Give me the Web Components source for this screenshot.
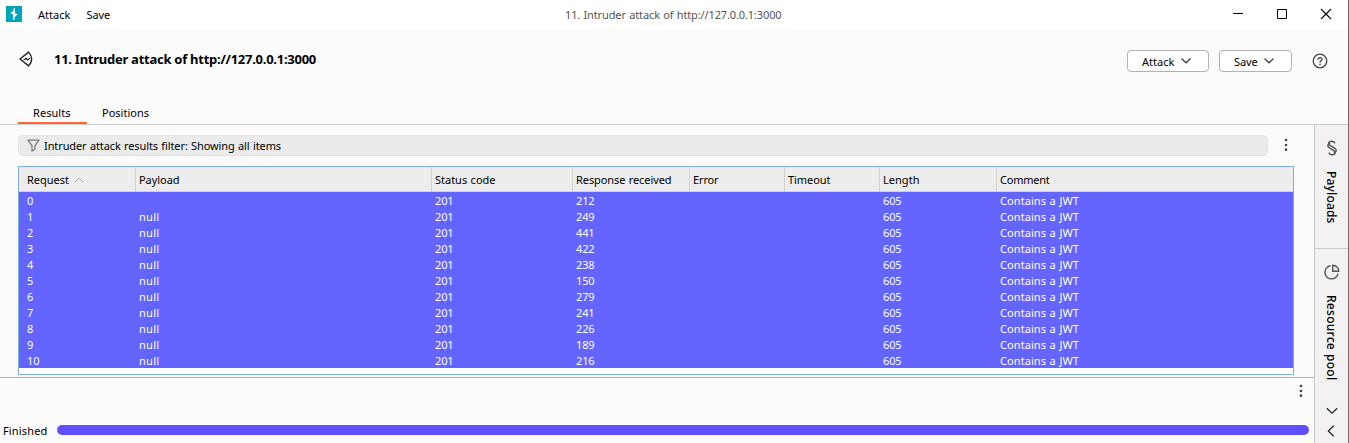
<!DOCTYPE html>
<html lang="en"><head><meta charset="utf-8"><title>Intruder attack</title>
<style>html,body{margin:0;height:100%;overflow:hidden}body{font:11px/16px "Noto Sans","Open Sans",sans-serif;color:#000}</style></head>
<body><attack-window></attack-window>
<script>
// Text run whose tracking is adjusted so that it fills a given advance width.
customElements.define('ui-text', class extends HTMLElement{
  connectedCallback(){
    const r=this.attachShadow({mode:'open'});
    r.innerHTML='<style>:host{display:inline-block;white-space:pre;word-spacing:.6px}span{display:inline-block}</style><span></span>';
    const s=r.querySelector('span');s.textContent=this.getAttribute('text');
    const w=+this.getAttribute('w');
    if(w){const vertical=getComputedStyle(this).writingMode!=='horizontal-tb',b=s.getBoundingClientRect();
      s.style.letterSpacing=((w-(vertical?b.height:b.width))/s.textContent.length)+'px';}
  }
});
const ICONS={
 logo:[16,16,'<path fill="#00a5bb" d="M0 0h16v16H0z"/><path fill="none" stroke="#fff" stroke-width="1.5" d="M8.3 2.2v2.6L5.8 7.2l4.4 1.4L7.8 11v2.8M8.3 4.8v3.4M7.8 7.6V11"/>'],
 intruder:[14,16,'<path fill="none" stroke="#222" stroke-width="1.4" stroke-linejoin="round" d="M1 8 9.6 1.1Q15.8 8 9.6 14.9Z"/><path fill="none" stroke="#222" stroke-width="1.1" d="M4.6 8.9 7 7.3l1.6 1.6 2.6-2"/>'],
 down:[12,8,'<path fill="none" stroke="#444" stroke-width="1.4" d="m1.5 1.5 4.5 4.3 4.5-4.3"/>'],
 up:[10,6,'<path fill="none" stroke="#aaa" d="m.7 5.2 4.3-4 4.3 4"/>'],
 help:[16,16,'<circle cx="8" cy="8" r="6.8" fill="none" stroke="#444" stroke-width="1.3"/><path fill="none" stroke="#444" stroke-width="1.25" d="M6 6.8C6 4 10 4 10 6.3 10 7.6 8 7.6 8 9.4"/><circle cx="8" cy="11.4" r=".8" fill="#444"/>'],
 min:[12,12,'<path stroke="#000" d="M1 5.5h10"/>'],
 max:[12,12,'<path fill="none" stroke="#000" d="M1.5 1.5h9v9h-9z"/>'],
 close:[12,12,'<path stroke="#000" stroke-width="1.1" d="m1 1 10 10M11 1 1 11"/>'],
 filter:[13,13,'<path fill="none" stroke="#777" stroke-width="1.2" stroke-linejoin="round" d="M1 1.2h11L8 6.6v3.7l-3 1.8V6.6Z"/>'],
 dots:[4,14,'<g fill="#444"><circle cx="2" cy="2" r="1.35"/><circle cx="2" cy="7" r="1.35"/><circle cx="2" cy="11.7" r="1.35"/></g>'],
 section:[12,16,'<path fill="none" stroke="#555" stroke-width="1.5" d="M8.8 3.4C8.2.6 2.8.4 2.6 3.6 2.5 6 10 7.3 10.2 10.2c.1 1.3-1 2-2.4 1.9M3 12.6c.6 2.8 6 3 6.2-.2C9.3 10 2 8.7 1.8 5.8 1.7 4.5 2.8 3.8 4.2 3.9"/>'],
 pie:[16,16,'<path fill="none" stroke="#555" stroke-width="1.4" d="M6.5 1.8A6.6 6.6 0 1 0 14 9.6M8.7 1.2V7.3h6A6 6 0 0 0 8.7 1.2Z"/>'],
 chev:[12,8,'<path fill="none" stroke="#222" stroke-width="1.2" d="m.8 1.2 5.2 5 5.2-5"/>'],
 left:[8,12,'<path fill="none" stroke="#222" stroke-width="1.2" d="M6.7.8 1.3 6l5.4 5.2"/>']
};
customElements.define('ui-icon', class extends HTMLElement{
  connectedCallback(){const [w,h,p]=ICONS[this.getAttribute('name')];
    this.attachShadow({mode:'open'}).innerHTML=`<style>:host{display:block;flex:none;width:${w}px;height:${h}px}svg{display:block}</style><svg width="${w}" height="${h}" viewBox="0 0 ${w} ${h}">${p}</svg>`;}
});
const define=(name,html)=>customElements.define(name,class extends HTMLElement{
  connectedCallback(){this.attachShadow({mode:'open'}).innerHTML=html;}
});
define('title-bar',`<style>:host{display:grid;grid-template-columns:565px 1fr 120px;height:30px;background:#fff;color:#000}
.m{display:flex;padding-left:6px;align-items:flex-start}ui-icon{margin-top:6px}.m ui-text{margin:7px 0 0 16px}.t{color:#555;margin-top:7px}
.w{display:flex;gap:32px;padding:2px 0 0 4px}</style>
<div class="m"><ui-icon name="logo"></ui-icon><ui-text text="Attack" w="32.5"></ui-text><ui-text text="Save" w="23.5"></ui-text></div>
<ui-text class="t" text="11. Intruder attack of http://127.0.0.1:3000" w="216.5"></ui-text>
<div class="w"><ui-icon name="min"></ui-icon><ui-icon name="max"></ui-icon><ui-icon name="close"></ui-icon></div>`);
define('menu-button',`<style>:host{display:flex;box-sizing:border-box;height:22px;border:1px solid #b5b0b2;border-radius:4px;background:#fff;padding:0 16px 0 14px;align-items:center;justify-content:space-between}ui-icon{margin-top:-1px}::slotted(ui-text){margin-top:2px}</style><slot></slot><ui-icon name="down"></ui-icon>`);
define('attack-header',`<style>:host{display:flex;height:63px;box-sizing:border-box;align-items:flex-start;padding:20px 20px 0 19px}
.i{margin-top:1px}.h{font-size:13px;font-weight:700;word-spacing:0;margin:1px auto 0 21px}menu-button{margin-right:10px}.s{margin-right:20px}.q{margin-top:3px}</style>
<ui-icon class="i" name="intruder"></ui-icon><ui-text class="h" text="11. Intruder attack of http://127.0.0.1:3000" w="262"></ui-text>
<menu-button style="width:82px"><ui-text text="Attack" w="32.5"></ui-text></menu-button>
<menu-button class="s" style="width:73px"><ui-text text="Save" w="23.5"></ui-text></menu-button><ui-icon class="q" name="help"></ui-icon>`);
define('tab-bar',`<style>:host{display:flex;height:32px;box-sizing:border-box;padding:10px 0 0 18px;border-bottom:1px solid #c8cccb}
div{box-sizing:border-box;height:21px;padding:2px 15px 0}.on{width:69px;border-bottom:2px solid #ff6633}</style>
<div class="on"><ui-text text="Results" w="37.5"></ui-text></div><div><ui-text text="Positions" w="47"></ui-text></div>`);
define('filter-bar',`<style>:host{display:flex;height:41px;box-sizing:border-box;padding:10px 24px 0 18px;align-items:flex-start}
.f{display:flex;box-sizing:border-box;width:1250px;height:21px;background:#ebebeb;border:1px solid #e4e4e4;border-radius:5px;padding-left:8px;align-items:center}.f ui-text{margin:1px 0 0 4px}.d{margin:3px 0 0 16px}</style>
<div class="f"><ui-icon name="filter"></ui-icon><ui-text text="Intruder attack results filter: Showing all items" w="237"></ui-text></div><ui-icon class="d" name="dots"></ui-icon>`);
customElements.define('results-table',class extends HTMLElement{connectedCallback(){
  const heads=[['Request',42],['Payload',40.5],['Status code',60.5],['Response received',95.5],['Error',25.5],['Timeout',42.5],['Length',36.5],['Comment',49.5]];
  const times=[212,249,441,422,238,150,279,241,226,189,216];
  const cell=(t,w)=>`<div>${t===''?'':`<ui-text text="${t}" w="${w}"></ui-text>`}</div>`;
  this.attachShadow({mode:'open'}).innerHTML=`<style>:host{display:block;box-sizing:border-box;width:1276px;height:209px;margin-left:18px;border:1px solid #82aedb;background:#fff}
  .r{display:grid;grid-template-columns:117px 296px 141px 117px 95px 95px 117px 1fr}
  .h{height:25px;box-sizing:border-box;background:#ededed;border-bottom:1px solid #d2d2d2}.h div{display:flex;align-items:flex-start;padding:5px 0 0 3px;border-right:1px solid #d2d2d2}.h div:last-child{border:0}
  .r div:first-child{padding-left:8px}.h ui-icon{margin:5px 0 0 5px}
  .b{height:16px;background:#6464ff;color:#fff}.b div{padding-left:3px;line-height:17px;height:16px}</style>
  <div class="r h">${heads.map(([t,w],i)=>`<div><ui-text text="${t}" w="${w}"></ui-text>${i?'':'<ui-icon name="up"></ui-icon>'}</div>`).join('')}</div>
  ${times.map((t,i)=>`<div class="r b">${cell(i,i>9?12.5:6.2)+cell(i?'null':'',20.5)+cell(201,18.5)+cell(t,18.5)+cell('','')+cell('','')+cell(605,18.5)+cell('Contains a JWT',79)}</div>`).join('')}`;
}});
define('progress-footer',`<style>:host{display:flex;flex-direction:column;height:66px;box-sizing:border-box;margin-top:2px;border-top:1px solid #b3b3b3}
.d{align-self:flex-end;margin:6px 11px 0 0}.p{display:flex;margin-top:25px;padding:0 5px 0 3px;align-items:flex-start;justify-content:space-between}.bar{width:1252px;height:10px;margin-top:2px;border-radius:5px;background:#5c50ff}</style>
<ui-icon class="d" name="dots"></ui-icon><div class="p"><ui-text text="Finished" w="44.5"></ui-text><div class="bar"></div></div>`);
define('side-rail',`<style>:host{display:flex;flex-direction:column;box-sizing:border-box;width:34px;background:#f3f1f2;border-left:1px solid #c8cccb}
section{display:flex;flex-direction:column;align-items:center;box-sizing:border-box}.a{height:124px;padding-top:15px;border-bottom:1px solid #c8cccb}.b{flex:1;padding-top:15px}
ui-text{writing-mode:vertical-rl;font-size:12px;font-weight:500;margin:15px 1px 0 0}.c{margin-top:26px}.l{margin:10px 1px 0 0}</style>
<section class="a"><ui-icon name="section"></ui-icon><ui-text text="Payloads" w="52.5"></ui-text></section>
<section class="b"><ui-icon name="pie"></ui-icon><ui-text text="Resource pool" w="85.5"></ui-text><ui-icon class="c" name="chev"></ui-icon><ui-icon class="l" name="left"></ui-icon></section>`);
define('attack-window',`<style>:host{display:block;box-sizing:border-box;width:1349px;height:443px;border-right:1px solid #6b6b6b;background:#fbfbfb;overflow:hidden}
.body{display:grid;grid-template-columns:1314px 34px;height:318px}</style>
<title-bar></title-bar><attack-header></attack-header><tab-bar></tab-bar>
<div class="body"><main><filter-bar></filter-bar><results-table></results-table><progress-footer></progress-footer></main><side-rail></side-rail></div>`);
</script></body></html>
